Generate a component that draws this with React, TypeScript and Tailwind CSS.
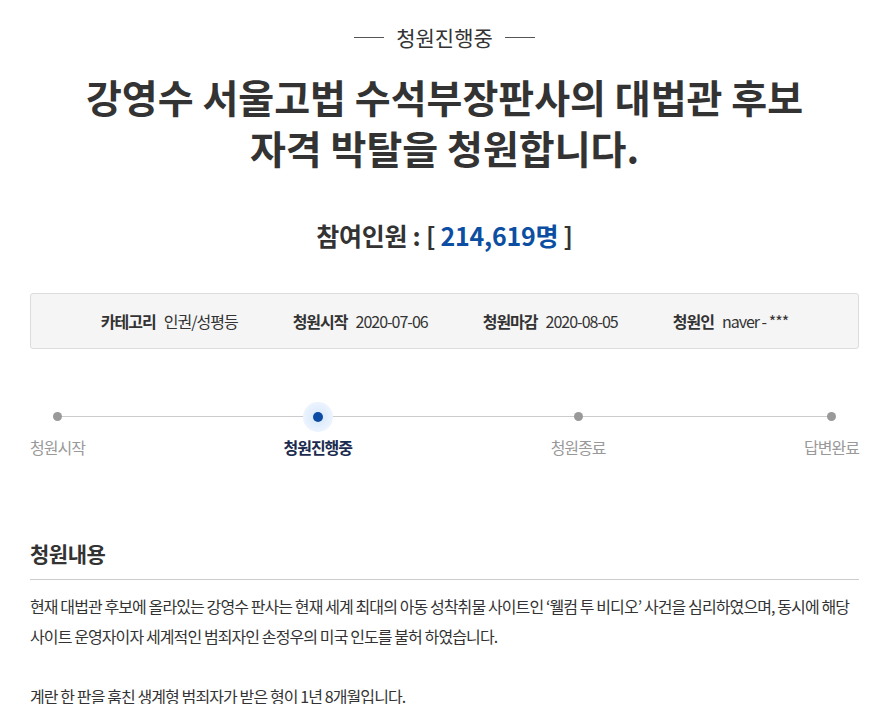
import React from "react";

const font = { fontFamily: '"Noto Sans CJK KR", "Noto Sans", sans-serif' };

export default function App() {
  const steps = [
    { label: "청원시작", active: false },
    { label: "청원진행중", active: true },
    { label: "청원종료", active: false },
    { label: "답변완료", active: false },
  ];
  return (
    <div className="w-[889px] bg-white text-[#333]" style={font}>
      <div className="px-[30px]">
        <div className="flex items-center justify-center gap-[12px] pt-[24px]">
          <span className="block w-[30px] h-px bg-[#555]" />
          <span className="text-[21px] leading-[26px] text-[#333]">청원진행중</span>
          <span className="block w-[30px] h-px bg-[#555]" />
        </div>
        <h1 className="mt-[21px] text-center text-[39px] leading-[51px] font-bold text-[#333]">
          강영수 서울고법 수석부장판사의 대법관 후보
          <br />
          자격 박탈을 청원합니다.
        </h1>
        <div className="mt-[46px] text-center text-[25px] leading-[32px] font-bold tracking-[-0.25px] text-[#333]">
          참여인원 : [ <span className="text-[#0b4ea2]">214,619명</span> ]
        </div>
        <div className="mt-[42px] h-[56px] rounded-[3px] border border-[#dcdcdc] bg-[#f5f5f5] flex items-center justify-center gap-[55px] text-[16px] tracking-[-1px] text-[#333]">
          <div className="flex items-center gap-[8px]">
            <span className="font-bold">카테고리</span>
            <span>인권/성평등</span>
          </div>
          <div className="flex items-center gap-[8px]">
            <span className="font-bold">청원시작</span>
            <span>2020-07-06</span>
          </div>
          <div className="flex items-center gap-[8px]">
            <span className="font-bold">청원마감</span>
            <span>2020-08-05</span>
          </div>
          <div className="flex items-center gap-[8px]">
            <span className="font-bold">청원인</span>
            <span>naver - ***</span>
          </div>
        </div>
        <div className="relative mt-[45px]">
          <div className="absolute left-[27px] right-[28px] top-[22px] h-px bg-[#ccc]" />
          <div className="relative flex justify-between">
            {steps.map((s) => (
              <div key={s.label} className="flex flex-col items-center">
                <div className="h-[45px] flex items-center justify-center">
                  {s.active ? (
                    <div className="w-[30px] h-[30px] rounded-full bg-[radial-gradient(circle,#d6e6fb_0%,#e9f2fe_60%,#f4f8ff_100%)] flex items-center justify-center">
                      <div className="w-[10px] h-[10px] rounded-full bg-[#0b4ba3]" />
                    </div>
                  ) : (
                    <div className="w-[9px] h-[9px] rounded-full bg-[#999]" />
                  )}
                </div>
                <span
                  className={
                    s.active
                      ? "text-[16px] leading-[16px] tracking-[-1px] font-bold text-[#1b2b4f]"
                      : "text-[16px] leading-[16px] tracking-[-1px] text-[#999]"
                  }
                >
                  {s.label}
                </span>
              </div>
            ))}
          </div>
        </div>
        <h2 className="mt-[84px] text-[21px] leading-[28px] font-bold tracking-[-0.5px] text-[#333]">청원내용</h2>
        <div className="mt-[12px] h-px bg-[#ccc]" />
        <div className="mt-[11px] text-[16px] leading-[30px] tracking-[-0.9px] text-[#333] whitespace-nowrap">
          <p>현재 대법관 후보에 올라있는 강영수 판사는 현재 세계 최대의 아동 성착취물 사이트인 ‘웰컴 투 비디오’ 사건을 심리하였으며, 동시에 해당</p>
          <p>사이트 운영자이자 세계적인 범죄자인 손정우의 미국 인도를 불허 하였습니다.</p>
          <p className="h-[30px]" />
          <p>계란 한 판을 훔친 생계형 범죄자가 받은 형이 1년 8개월입니다.</p>
        </div>
      </div>
    </div>
  );
}
